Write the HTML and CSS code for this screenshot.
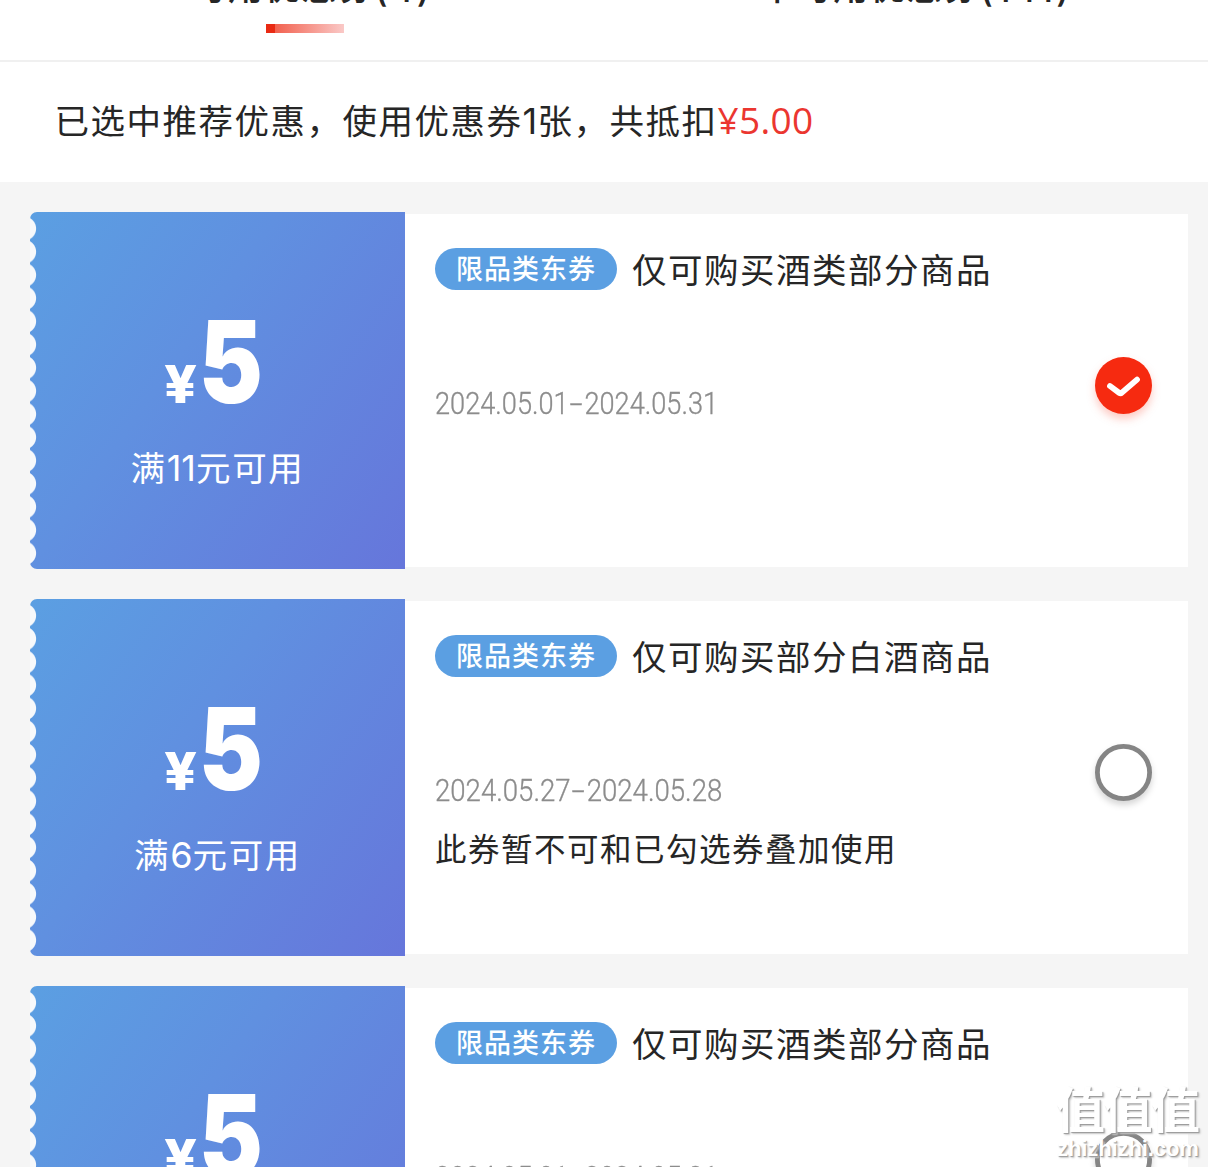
FILE: index.html
```html
<!DOCTYPE html>
<html lang="zh-CN">
<head>
<meta charset="utf-8">
<title>优惠券</title>
<link rel="stylesheet" href="styles.css">
</head>
<body>
<main class="page">
  <nav class="tabs">
    <div class="tab tab-active"><span class="tab-label">可用优惠券<span class="count">(4)</span></span><i class="tab-bar"></i></div>
    <div class="tab"><span class="tab-label">不可用优惠券<span class="count">(141)</span></span></div>
  </nav>
  <p class="summary">已选中推荐优惠，使用优惠券<span class="one">1</span>张，共抵扣<span class="amount">¥5.00</span></p>
  <section class="list">
    <article class="coupon">
      <div class="ticket">
        <div class="price"><span class="yen">¥</span><span class="num">5</span></div>
        <div class="rule">满<span class="digits">11</span>元可用</div>
      </div>
      <div class="body">
        <div class="info">
          <div class="head"><span class="tag">限品类东券</span><h2 class="title">仅可购买酒类部分商品</h2></div>
          <div class="date">2024.05.01<span class="dash">-</span>2024.05.31</div>
        </div>
        <svg class="radio radio-on" viewBox="0 0 58 58"><circle cx="28.5" cy="29.5" r="28.5" fill="#f62a10"/><path d="M15 30L24.2 36.8Q25.6 37.8 26.9 36.6L42 23.6" fill="none" stroke="#fff" stroke-width="5.8" stroke-linecap="round" stroke-linejoin="round"/></svg>
      </div>
    </article>
    <article class="coupon">
      <div class="ticket">
        <div class="price"><span class="yen">¥</span><span class="num">5</span></div>
        <div class="rule">满<span class="digits">6</span>元可用</div>
      </div>
      <div class="body">
        <div class="info">
          <div class="head"><span class="tag">限品类东券</span><h2 class="title">仅可购买部分白酒商品</h2></div>
          <div class="date date-wide">2024.05.27<span class="dash">-</span>2024.05.28</div>
          <div class="note">此券暂不可和已勾选券叠加使用</div>
        </div>
        <svg class="radio" viewBox="0 0 58 58"><circle cx="28.5" cy="29.5" r="26.1" fill="#fff" stroke="#858585" stroke-width="4.8"/></svg>
      </div>
    </article>
    <article class="coupon">
      <div class="ticket">
        <div class="price"><span class="yen">¥</span><span class="num">5</span></div>
        <div class="rule">满<span class="digits">11</span>元可用</div>
      </div>
      <div class="body">
        <div class="info">
          <div class="head"><span class="tag">限品类东券</span><h2 class="title">仅可购买酒类部分商品</h2></div>
          <div class="date">2024.05.01<span class="dash">-</span>2024.05.31</div>
        </div>
        <svg class="radio" viewBox="0 0 58 58"><circle cx="28.5" cy="29.5" r="26.1" fill="#fff" stroke="#858585" stroke-width="4.8"/></svg>
      </div>
    </article>
  </section>
  <div class="watermark"><span class="wm-name">值值值</span><span class="wm-url">zhizhizhi.com</span></div>
</main>
</body>
</html>
```

FILE: styles.css
```css
* { box-sizing: border-box; }
body { margin: 0; }
.page {
  position: relative;
  width: 1208px;
  height: 1167px;
  overflow: hidden;
  background: #f5f5f5;
  color: #262626;
  font-family: "Noto Sans CJK SC", sans-serif;
}
.tabs {
  display: flex;
  height: 62px;
  background: #fff;
  border-bottom: 2px solid #f0f0f0;
}
.tab {
  flex: 1;
  display: flex;
  flex-direction: column;
  align-items: center;
  padding-left: 20px;
}
.tab-label {
  height: 40px;
  margin-top: -35px;
  font-size: 35px;
  line-height: 40px;
  letter-spacing: 1.7px;
  font-weight: 500;
  white-space: nowrap;
}
.count {
  font-family: Inter, sans-serif;
  font-size: 35px;
  line-height: 1;
  letter-spacing: 3px;
  vertical-align: -2px;
}
.tab-bar {
  width: 78px;
  height: 9px;
  margin: 19px 14px 0 0;
  background: linear-gradient(90deg, #e92a13 9px, #f2614f 9px, #fac9c7 78px);
}
.summary {
  height: 120px;
  margin: 0;
  padding-left: 54.5px;
  background: #fff;
  font-size: 34.5px;
  line-height: 115px;
  letter-spacing: 1.5px;
  white-space: nowrap;
}
.one {
  display: inline-block;
  width: 15px;
  font-family: Inter, sans-serif;
  font-size: 36px;
  line-height: 1;
}
.amount {
  color: #eb3630;
  font-family: "Open Sans", sans-serif;
  font-size: 37px;
  letter-spacing: 0.3px;
}
.list {
  display: flex;
  flex-direction: column;
  gap: 30px;
  padding: 30px 20px 0 30px;
}
.coupon {
  display: flex;
  align-items: center;
  height: 357px;
  flex: none;
}
.ticket {
  position: relative;
  display: flex;
  flex-direction: column;
  align-items: center;
  width: 375px;
  height: 357px;
  padding-top: 92px;
  border-radius: 7px 0 0 7px;
  background: linear-gradient(125deg, #5b9fe2 0%, #6090e0 40%, #6676db 100%);
  color: #fff;
}
.ticket::before {
  content: "";
  position: absolute;
  left: 0;
  top: 4.5px;
  width: 7px;
  height: 348px;
  background: radial-gradient(circle at -6px 50%, #f7f9fb 11.6px, transparent 12.6px) 0 0 / 7px 23.2px repeat-y;
}
.price {
  display: flex;
  align-items: baseline;
  height: 127px;
  line-height: 116px;
  font-family: Inter, sans-serif;
  font-weight: 800;
  padding-right: 8px;
}
.yen {
  width: 35px;
  font-size: 52px;
  transform: scaleX(1.1);
  transform-origin: left;
}
.num {
  width: 64px;
  font-size: 114px;
  font-weight: 900;
  transform: scaleX(0.84);
  transform-origin: left;
}
.rule {
  height: 70px;
  font-size: 34.5px;
  line-height: 70px;
  letter-spacing: 1.7px;
}
.digits {
  font-family: Inter, sans-serif;
  font-size: 36px;
  line-height: 1;
  letter-spacing: 0;
}
.body {
  display: flex;
  flex: 1;
  height: 353px;
  padding: 34px 35px 0 30px;
  background: #fff;
}
.info { flex: 1; }
.head {
  display: flex;
  align-items: center;
  gap: 15px;
  height: 42px;
}
.tag {
  width: 182px;
  height: 42px;
  border-radius: 21px;
  background: #5b9fe2;
  color: #fff;
  font-size: 27px;
  font-weight: 500;
  line-height: 40px;
  letter-spacing: 1px;
  text-align: center;
}
.title {
  height: 42px;
  margin: 0;
  font-size: 34.5px;
  font-weight: 400;
  line-height: 40px;
  letter-spacing: 1.5px;
}
.date {
  width: max-content;
  margin-top: 94px;
  color: #8c8c8c;
  font-family: Roboto, sans-serif;
  font-size: 31px;
  line-height: 40px;
  font-weight: 300;
  -webkit-text-stroke: 0.35px #8c8c8c;
  transform: scaleX(0.877);
  transform-origin: left;
}
.date-wide { transform: scaleX(0.89); }
.dash {
  display: inline-block;
  width: 18px;
  text-align: center;
  transform: scaleX(1.7);
}
.note {
  margin-top: 14px;
  font-size: 31.5px;
  line-height: 44px;
  letter-spacing: 1.5px;
}
.radio {
  width: 58px;
  height: 58px;
  margin-top: 108px;
  overflow: visible;
  filter: drop-shadow(0 4px 3px rgba(0, 0, 0, 0.16));
}
.radio-on { filter: drop-shadow(0 5px 4px rgba(246, 42, 16, 0.25)); }
.watermark {
  position: absolute;
  left: 1056px;
  top: 1080px;
  display: flex;
  flex-direction: column;
  color: #fff;
  text-shadow: 1px 1px 1px #999, 2px 2px 2px #ccc;
}
.wm-name {
  height: 56px;
  font-size: 49px;
  font-weight: 700;
  line-height: 54px;
  letter-spacing: -1.5px;
}
.wm-url {
  padding-left: 1px;
  font-family: "Liberation Sans", sans-serif;
  font-size: 22px;
  font-weight: 700;
  line-height: 26px;
  letter-spacing: -0.1px;
}
```
